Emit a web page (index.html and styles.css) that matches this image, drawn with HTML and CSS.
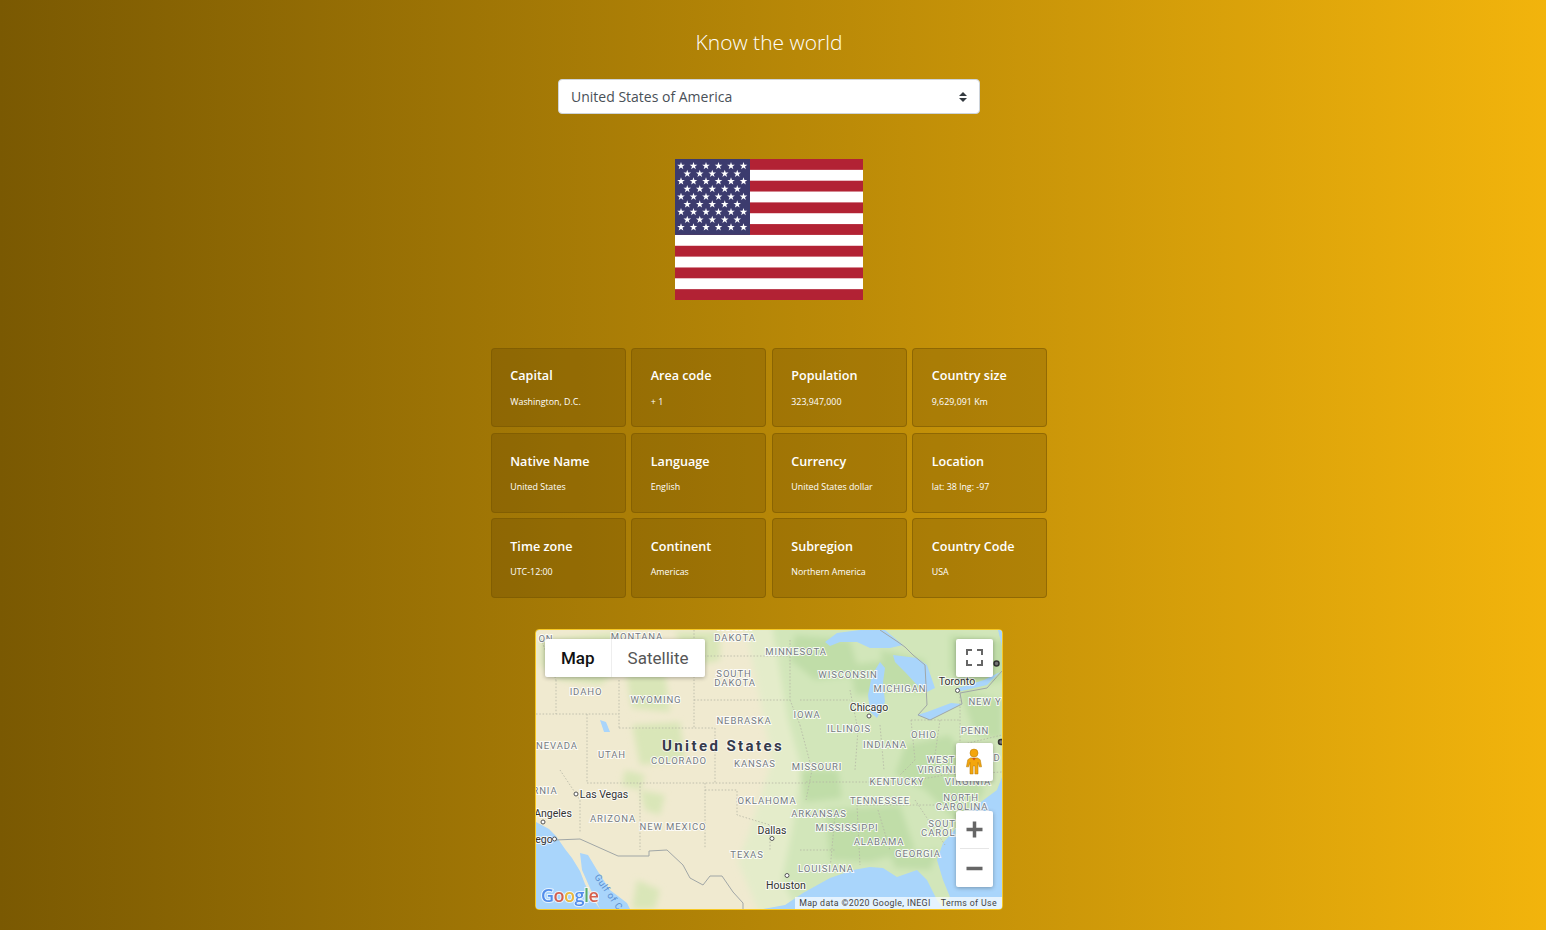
FILE: index.html
```html
<!DOCTYPE html>
<html lang="en">
<head>
<meta charset="utf-8">
<title>Know the world</title>
<link rel="stylesheet" href="styles.css">
</head>
<body>
<main class="page">
  <h1 class="title">Know the world</h1>
  <select class="country-select">
    <option>United States of America</option>
  </select>

  <svg class="flag" viewBox="0 0 188 141" role="img" aria-label="Flag of the United States">
    <rect width="188" height="141" fill="#b22234"/>
    <g fill="#fff">
      <rect y="10.85" width="188" height="10.85"/>
      <rect y="32.54" width="188" height="10.85"/>
      <rect y="54.23" width="188" height="10.85"/>
      <rect y="75.92" width="188" height="10.85"/>
      <rect y="97.62" width="188" height="10.85"/>
      <rect y="119.3" width="188" height="10.85"/>
    </g>
    <rect width="75" height="75.9" fill="#3c3b6e"/>
    <defs>
      <polygon id="star" points="0,-4 0.95,-1.25 3.8,-1.25 1.5,0.5 2.35,3.25 0,1.55 -2.35,3.25 -1.5,0.5 -3.8,-1.25 -0.95,-1.25"/>
      <g id="row6">
        <use href="#star" x="6"/><use href="#star" x="18.5"/><use href="#star" x="31"/>
        <use href="#star" x="43.5"/><use href="#star" x="56"/><use href="#star" x="68.5"/>
      </g>
      <g id="row5">
        <use href="#star" x="12.25"/><use href="#star" x="24.75"/><use href="#star" x="37.25"/>
        <use href="#star" x="49.75"/><use href="#star" x="62.25"/>
      </g>
    </defs>
    <g fill="#fff">
      <use href="#row6" y="7"/><use href="#row5" y="14.67"/><use href="#row6" y="22.33"/>
      <use href="#row5" y="30"/><use href="#row6" y="37.67"/><use href="#row5" y="45.33"/>
      <use href="#row6" y="53"/><use href="#row5" y="60.67"/><use href="#row6" y="68.33"/>
    </g>
  </svg>

  <section class="facts">
    <article class="fact"><h2>Capital</h2><p>Washington, D.C.</p></article>
    <article class="fact"><h2>Area code</h2><p>+ 1</p></article>
    <article class="fact"><h2>Population</h2><p>323,947,000</p></article>
    <article class="fact"><h2>Country size</h2><p>9,629,091 Km</p></article>
    <article class="fact"><h2>Native Name</h2><p>United States</p></article>
    <article class="fact"><h2>Language</h2><p>English</p></article>
    <article class="fact"><h2>Currency</h2><p>United States dollar</p></article>
    <article class="fact"><h2>Location</h2><p>lat: 38 lng: -97</p></article>
    <article class="fact"><h2>Time zone</h2><p>UTC-12:00</p></article>
    <article class="fact"><h2>Continent</h2><p>Americas</p></article>
    <article class="fact"><h2>Subregion</h2><p>Northern America</p></article>
    <article class="fact"><h2>Country Code</h2><p>USA</p></article>
  </section>

  <section class="map">
    <svg class="map-canvas" viewBox="536 630 466 279" aria-label="Map of the United States">
      <defs>
        <filter id="soft" x="-10%" y="-10%" width="120%" height="120%"><feGaussianBlur stdDeviation="3"/></filter>
        <filter id="softer" x="-10%" y="-10%" width="120%" height="120%"><feGaussianBlur stdDeviation="0.5"/></filter>
      </defs>
      <rect x="536" y="630" width="466" height="279" fill="#f0ead0"/>
      <g filter="url(#soft)">
        <polygon fill="#e4ecca" points="745,625 760,700 772,760 750,830 738,862 760,915 1010,915 1010,625"/>
        <polygon fill="#d2e6ba" points="772,625 788,720 802,770 792,830 782,880 800,915 1010,915 1010,625"/>
        <g fill="#c0dda8">
          <polygon points="795,635 850,640 860,675 815,680 790,660"/>
          <polygon points="850,665 890,660 885,695 855,695"/>
          <polygon points="880,650 925,660 925,692 890,690"/>
          <polygon points="950,635 1005,640 1005,680 965,690 950,670"/>
          <polygon points="800,770 838,770 842,798 805,802"/>
          <polygon points="905,745 950,735 985,790 960,825 925,790 895,775"/>
          <polygon points="825,810 900,805 915,850 870,862 830,860"/>
          <polygon points="890,855 940,850 930,870 895,868"/>
          <polygon points="960,690 1002,700 1002,740 975,735"/>
        </g>
        <g fill="#d9e6b8">
          <polygon points="540,640 620,632 625,665 600,685 560,680 540,665"/>
          <polygon points="625,668 665,672 670,712 632,708"/>
          <polygon points="632,725 680,722 685,760 640,765"/>
          <polygon points="625,770 645,775 640,790 622,785"/>
          <polygon points="640,790 665,795 660,815 645,810"/>
          <polygon points="675,632 720,632 720,660 690,668"/>
          <polygon points="637,880 660,890 655,909 632,909"/>
        </g>
      </g>
      <g fill="#a9d5fb" filter="url(#softer)">
        <polygon points="763,909 785,905 803,893 830,878 853,870 870,867 883,868 897,877 917,870 927,880 937,900 943,908 950,897 943,880 937,860 943,843 957,827 970,810 997,790 1002,777 1003,910 763,910"/>
        <polygon points="536,822 549,829 556,836 565,849 572,858 580,871 585,884 592,898 600,909 536,909"/>
        <polygon points="580,853 588,855 597,870 610,890 627,903 630,909 600,909 590,888 582,870"/>
        <polygon points="825,642 837,633 860,630 885,630 903,645 890,648 870,648 857,642 840,642 830,646"/>
        <polygon points="880,662 872,675 868,695 870,712 877,718 885,702 883,682 885,668"/>
        <polygon points="893,655 917,658 927,665 935,688 927,692 917,685 905,672 895,662"/>
        <polygon points="917,715 930,720 962,704 951,703 927,712"/>
        <polygon points="957,692 987,685 1000,672 984,680 958,688"/>
        <polygon points="600,720 606,722 610,732 604,732"/>
        <polygon points="998,630 1003,630 1003,650"/>
      </g>
      <g class="borders-state">
        <path d="M556 680V714M536 714H619M619 680V728M619 728H715M694 630V728M694 656H790M694 700H790M715 728V783"/>
        <path d="M587 714V783M587 783H806M640 783V850M705 783V848M705 790H737V815L770 825M560 770L580 800V832"/>
        <path d="M790 640V700M790 700L800 725M800 700H850M850 690L858 730L855 770M800 725L812 770L806 800M880 725L884 770M911 720L915 760L900 775"/>
        <path d="M806 782H905L945 775L1002 772M770 825V850M810 815H835M835 815L830 870M857 805L860 865M860 805H940M878 810L890 850M915 800L945 845M800 850H835"/>
        <path d="M911 720H960M960 690V745L1002 735M940 720L935 755M540 636L556 680"/>
      </g>
      <path class="borders-country" d="M555 840L580 839L618 856H649V851L667 850L683 865L690 878L703 885L710 876H722L733 892L743 903V909"/>
      <path class="borders-country" d="M880 630L898 642L905 647L913 655L925 665L927 705L918 715L930 720L962 704L960 693L987 688L1002 671"/>

      <g class="state">
        <text x="546" y="642">ON</text><text x="637" y="640">MONTANA</text>
        <text x="735" y="630">NORTH</text><text x="735" y="641">DAKOTA</text>
        <text x="796" y="655">MINNESOTA</text>
        <text x="734" y="677">SOUTH</text><text x="735" y="686">DAKOTA</text>
        <text x="848" y="678">WISCONSIN</text><text x="900" y="692">MICHIGAN</text>
        <text x="586" y="695">IDAHO</text><text x="656" y="703">WYOMING</text>
        <text x="985" y="705">NEW Y</text><text x="807" y="718">IOWA</text>
        <text x="744" y="724">NEBRASKA</text><text x="849" y="732">ILLINOIS</text>
        <text x="924" y="738">OHIO</text><text x="975" y="734">PENN</text>
        <text x="557" y="749">NEVADA</text><text x="612" y="758">UTAH</text>
        <text x="679" y="764">COLORADO</text><text x="755" y="767">KANSAS</text>
        <text x="885" y="748">INDIANA</text><text x="817" y="770">MISSOURI</text>
        <text x="941" y="763">WEST</text><text x="937" y="773">VIRGINI</text>
        <text x="997" y="761">D</text><text x="897" y="785">KENTUCKY</text>
        <text x="968" y="785">VIRGINIA</text><text x="961" y="801">NORTH</text>
        <text x="962" y="810">CAROLINA</text><text x="880" y="804">TENNESSEE</text>
        <text x="767" y="804">OKLAHOMA</text><text x="819" y="817">ARKANSAS</text>
        <text x="545" y="794">RNIA</text><text x="613" y="822">ARIZONA</text>
        <text x="847" y="831">MISSISSIPPI</text><text x="942" y="827">SOUT</text>
        <text x="940" y="836">CAROLI</text><text x="673" y="830">NEW MEXICO</text>
        <text x="879" y="845">ALABAMA</text><text x="918" y="857">GEORGIA</text>
        <text x="747" y="858">TEXAS</text><text x="826" y="872">LOUISIANA</text>
      </g>
      <text class="country" x="723" y="751">United States</text>
      <g class="city">
        <text x="957" y="685">Toronto</text><text x="869" y="711">Chicago</text>
        <text x="604" y="798">Las Vegas</text><text x="553" y="817">Angeles</text>
        <text x="772" y="834">Dallas</text><text x="786" y="889">Houston</text>
        <text x="544" y="843">ego</text>
      </g>
      <g class="pin">
        <circle cx="957.500" cy="690.500" r="2"/><circle cx="869" cy="716" r="2"/>
        <circle cx="576" cy="794" r="2"/><circle cx="543" cy="822" r="2"/>
        <circle cx="772" cy="838.500" r="2"/><circle cx="787" cy="875.500" r="2"/>
        <circle cx="554.500" cy="839" r="2"/>
      </g>
      <g class="transit">
        <circle cx="996.500" cy="663.500" r="2.500"/><circle cx="1001" cy="742" r="2.500"/>
      </g>
      <text class="gulf" transform="translate(594 877) rotate(55)">Gulf of C</text>
      <text class="google" x="541" y="902"><tspan fill="#4a86e8">G</tspan><tspan fill="#d9543c">o</tspan><tspan fill="#f0b429">o</tspan><tspan fill="#4a86e8">g</tspan><tspan fill="#4fa75b">l</tspan><tspan fill="#d9543c">e</tspan></text>
    </svg>

    <div class="map-type">
      <span class="map-type-btn is-active">Map</span>
      <span class="map-type-btn">Satellite</span>
    </div>
    <div class="map-btn map-fullscreen">
      <svg width="17" height="17" viewBox="0 0 17 17"><path class="ctl-line" d="M1 6V1H6M11 1H16V6M16 11V16H11M6 16H1V11"/></svg>
    </div>
    <div class="map-btn map-pegman">
      <svg class="pegman-icon" width="16" height="29" viewBox="0 0 18 30">
        <circle cx="9" cy="5.500" r="4.500" class="peg"/>
        <path class="peg" d="M5 11H13L16 13L17.500 21L15 21L13.500 16V29H10V20H8V29H4.500V16L3 21L0.500 21L2 13Z"/>
        <path d="M7 11L9 14L11 11Z" fill="#d1501f"/>
      </svg>
    </div>
    <div class="map-zoom">
      <div class="map-zoom-btn"><svg width="17" height="17" viewBox="0 0 17 17"><path class="zoom-line" d="M0.500 8.500H16.500M8.500 0.500V16.500"/></svg></div>
      <div class="map-zoom-rule"></div>
      <div class="map-zoom-btn"><svg width="17" height="17" viewBox="0 0 17 17"><path class="zoom-line" d="M0.500 8.500H16.500"/></svg></div>
    </div>
    <div class="map-attrib"><span>Map data ©2020 Google, INEGI</span><span>Terms of Use</span></div>
  </section>
</main>
</body>
</html>
```

FILE: styles.css
```css
* { box-sizing: border-box; }
html, body { margin: 0; }
body {
  min-height: 100vh;
  background: linear-gradient(to right, #7a5902, #f2b40c);
  font-family: "Open Sans", "Noto Sans", "Liberation Sans", sans-serif;
  color: #fff;
}
.page {
  display: flex;
  flex-direction: column;
  align-items: center;
  padding: 26px 8px 20px 0;
}
.title {
  margin: 0;
  font-size: 21px;
  font-weight: 300;
  line-height: 32px;
}
.country-select {
  appearance: none;
  margin-top: 21px;
  width: 422px;
  height: 35px;
  padding: 0 30px 0 12px;
  border: 1px solid #ced4da;
  border-radius: 4px;
  background: #fff url("data:image/svg+xml,%3csvg xmlns='http://www.w3.org/2000/svg' width='8' height='10' viewBox='0 0 4 5'%3e%3cpath fill='%23343a40' d='M2 0L0 2h4zm0 5L0 3h4z'/%3e%3c/svg%3e") no-repeat right 12px center;
  font-family: inherit;
  font-size: 14px;
  color: #495057;
}
.flag {
  display: block;
  margin-top: 45px;
  width: 188px;
  height: 141px;
}
.facts {
  display: grid;
  grid-template-columns: repeat(4, 135px);
  grid-auto-rows: 79.5px;
  column-gap: 5.5px;
  row-gap: 5.8px;
  margin-top: 47.8px;
}
.fact {
  padding: 18.5px 18px 0 18.5px;
  border: 1px solid rgba(120, 85, 0, 0.55);
  border-radius: 4px;
  background: rgba(60, 40, 0, 0.18);
}
.fact h2 {
  margin: 0;
  font-size: 12.6px;
  font-weight: 600;
  line-height: 18px;
}
.fact p {
  margin: 9.4px 0 0;
  font-size: 8.9px;
  font-weight: 400;
  line-height: 14px;
}
.map {
  position: relative;
  margin-top: 31px;
  width: 468px;
  height: 281px;
  border: 1px solid #f7c825;
  border-radius: 4px;
  overflow: hidden;
}
.map-canvas {
  display: block;
  width: 466px;
  height: 279px;
}
.borders-state path {
  fill: none;
  stroke: #b4b5a5;
  stroke-width: 0.8;
  stroke-dasharray: 1.500 1.800;
}
.borders-country {
  fill: none;
  stroke: #a0a6a6;
  stroke-width: 1;
}
.state text {
  font-family: Roboto, sans-serif;
  font-size: 9.500px;
  letter-spacing: 0.9px;
  text-anchor: middle;
  fill: #767c82;
  stroke: rgba(255, 255, 255, 0.85);
  stroke-width: 2px;
  paint-order: stroke;
}
.country {
  font-family: Roboto, sans-serif;
  font-size: 15px;
  font-weight: 700;
  letter-spacing: 2.400px;
  text-anchor: middle;
  fill: #353a4b;
  stroke: rgba(255, 255, 255, 0.7);
  stroke-width: 2px;
  paint-order: stroke;
}
.city text {
  font-family: Roboto, sans-serif;
  font-size: 10.500px;
  text-anchor: middle;
  fill: #333;
  stroke: rgba(255, 255, 255, 0.8);
  stroke-width: 2px;
  paint-order: stroke;
}
.pin circle {
  fill: #fff;
  stroke: #555;
  stroke-width: 1;
}
.transit circle {
  fill: #777;
  stroke: #333;
  stroke-width: 1.500;
}
.gulf {
  font-family: Roboto, sans-serif;
  font-size: 9.500px;
  letter-spacing: 0.5px;
  fill: #5a8fd0;
}
.google {
  font-family: "Open Sans", sans-serif;
  font-size: 18px;
  font-weight: 600;
  letter-spacing: -0.5px;
  opacity: 0.9;
  stroke: rgba(255, 255, 255, 0.8);
  stroke-width: 2px;
  paint-order: stroke;
}
.map-type {
  position: absolute;
  left: 9px;
  top: 9px;
  display: flex;
  height: 38px;
  border-radius: 2px;
  background: #fff;
  box-shadow: 0 1px 4px rgba(0, 0, 0, 0.3);
  font-family: Roboto, sans-serif;
  font-size: 17px;
}
.map-type-btn {
  display: flex;
  align-items: center;
  padding: 0 16px;
  color: #565656;
}
.map-type-btn.is-active {
  border-right: 1px solid #eee;
  color: #111;
  font-weight: 500;
}
.map-btn {
  position: absolute;
  left: 420px;
  display: flex;
  align-items: center;
  justify-content: center;
  width: 37px;
  height: 38px;
  border-radius: 2px;
  background: #fff;
  box-shadow: 0 1px 4px rgba(0, 0, 0, 0.3);
}
.map-fullscreen { top: 9px; }
.map-pegman { top: 113px; }
.pegman-icon { margin-right: 2px; }
.ctl-line {
  fill: none;
  stroke: #666;
  stroke-width: 2;
}
.peg {
  fill: #f4a60c;
  stroke: #b57a08;
  stroke-width: 0.6;
}
.map-zoom {
  position: absolute;
  left: 420px;
  top: 181px;
  width: 37px;
  height: 76px;
  border-radius: 2px;
  background: #fff;
  box-shadow: 0 1px 4px rgba(0, 0, 0, 0.3);
}
.map-zoom-btn {
  display: flex;
  align-items: center;
  justify-content: center;
  height: 37.500px;
}
.map-zoom-rule {
  height: 1px;
  margin: 0 4px;
  background: #e6e6e6;
}
.zoom-line {
  fill: none;
  stroke: #666;
  stroke-width: 3.500;
}
.map-attrib {
  position: absolute;
  right: 0;
  bottom: 0;
  display: flex;
  gap: 10px;
  height: 12px;
  padding: 0 5px 0 4px;
  background: rgba(255, 255, 255, 0.7);
  font-family: Roboto, sans-serif;
  font-size: 8.800px;
  letter-spacing: 0.35px;
  line-height: 13px;
  color: #444;
}
```
